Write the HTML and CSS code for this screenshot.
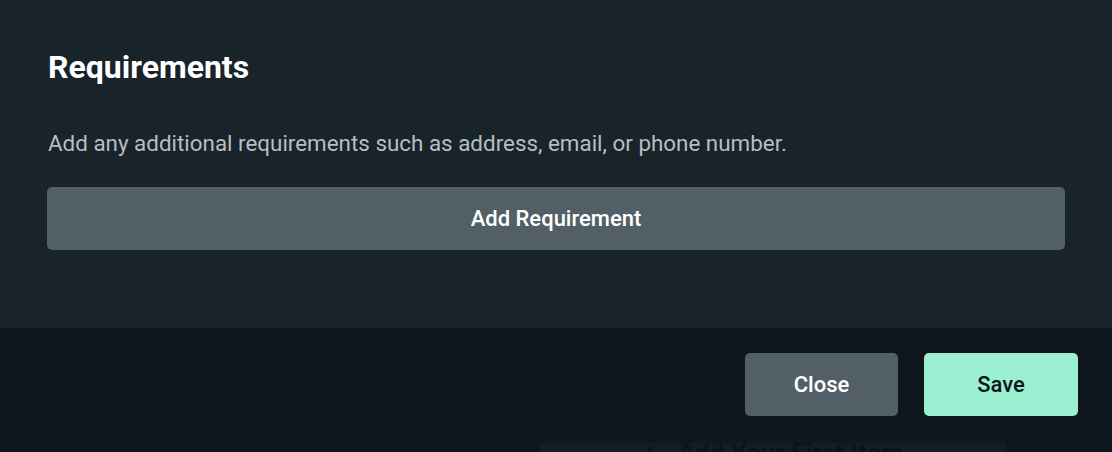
FILE: index.html
```html
<!DOCTYPE html>
<html lang="en">
<head>
<meta charset="utf-8">
<title>Requirements</title>
<link rel="stylesheet" href="styles.css">
</head>
<body>
  <div class="modal">
    <div class="modal-body">
      <h2 class="modal-title">Requirements</h2>
      <p class="modal-text">Add any additional requirements such as address, email, or phone number.</p>
      <button class="btn btn-wide" type="button">Add Requirement</button>
    </div>
    <div class="modal-footer">
      <button class="btn btn-close" type="button">Close</button>
      <button class="btn btn-save" type="button">Save</button>
    </div>
  </div>
  <div class="page-behind">
    <div class="first-item"><span class="plus">+</span>Add Your First Item</div>
  </div>
</body>
</html>
```

FILE: styles.css
```css
html, body {
  margin: 0;
  padding: 0;
}

body {
  background: #0f161d;
  font-family: Roboto, "Liberation Sans", sans-serif;
  overflow: hidden;
  height: 452px;
}

.modal {
  display: flex;
  flex-direction: column;
}

.modal-body {
  background: #19232a;
  padding: 47px 47px 78px 47px;
  display: flex;
  flex-direction: column;
}

.modal-title {
  margin: 0 0 0 1px;
  color: #ffffff;
  font-size: 32px;
  font-weight: 700;
  line-height: 40px;
}

.modal-text {
  margin: 43px 0 0 1px;
  color: #b6bec4;
  font-size: 22.4px;
  line-height: 26px;
}

.btn {
  border: none;
  border-radius: 5px;
  font-family: "Roboto Medium", Roboto, "Liberation Sans", sans-serif;
  font-size: 22px;
  font-weight: 500;
  height: 63px;
  cursor: pointer;
}

.btn-wide {
  margin-top: 31px;
  width: 100%;
  background: #535f66;
  color: #ffffff;
}

.modal-footer {
  background: #0f161d;
  display: flex;
  justify-content: flex-end;
  gap: 26px;
  padding: 25px 34px 27px 0;
}

.btn-close {
  width: 153px;
  background: #535f66;
  color: #ffffff;
}

.btn-save {
  width: 154px;
  background: #9bf0d2;
  color: #0f161d;
}

.page-behind {
  display: flex;
  padding-left: 541px;
}

.first-item {
  width: 465px;
  height: 60px;
  background: #131e22;
  color: #0c1419;
  font-size: 26px;
  font-weight: 700;
  line-height: 20px;
  text-align: center;
}

.plus {
  margin-right: 20px;
}
```
